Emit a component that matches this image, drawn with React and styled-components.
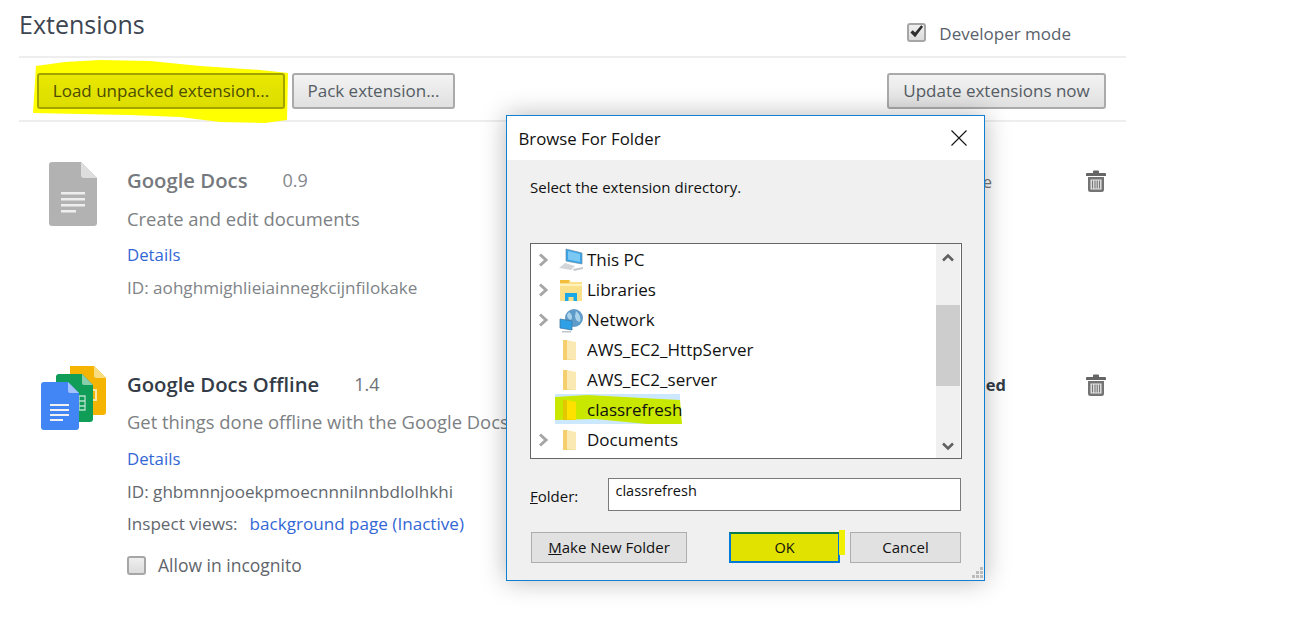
import React from "react";
import styled, { createGlobalStyle } from "styled-components";

const Global = createGlobalStyle`
  html, body { margin: 0; padding: 0; background: #fff; }
  #root { height: 624px; overflow: hidden; }
  * { box-sizing: border-box; }
`;

const Page = styled.div`
  position: relative;
  width: 1301px;
  height: 624px;
  padding-left: 19px;
  font-family: "Open Sans", sans-serif;
  color: #3c4550;
  isolation: isolate;
`;
const Content = styled.div`width: 1107px;`;
const Header = styled.header`
  height: 58px;
  border-bottom: 2px solid #eee;
  display: flex;
  justify-content: space-between;
  padding-right: 55px;
`;
const Title = styled.h1`
  margin: 6px 0 0;
  font-size: 25px;
  line-height: 36px;
  font-weight: 400;
  color: #3c4550;
`;
const DevMode = styled.label`
  display: flex;
  align-items: center;
  gap: 13px;
  height: 30px;
  margin-top: 18px;
  font-size: 17px;
  color: #59616b;
`;
const Box = styled.span`
  width: 19px;
  height: 19px;
  border: 2px solid #a6a6a6;
  border-radius: 3px;
  background: linear-gradient(#efefef, #dcdcdc);
  display: inline-flex;
  align-items: center;
  justify-content: center;
  flex: none;
  margin-top: ${p => p.$shift || 0}px;
`;
const Toolbar = styled.div`
  height: 64px;
  border-bottom: 2px solid #eee;
  padding: 15px 20px 0 18px;
  display: flex;
  gap: 7px;
`;
const ToolWrap = styled.div`
  position: relative;
  z-index: 0;
  margin-left: ${p => (p.$push ? "auto" : "0")};
`;
const ToolButton = styled.button`
  height: 36px;
  width: ${p => p.$w}px;
  border-radius: 3px;
  border: 2px solid ${p => (p.$hl ? "#a3a300" : "#aaa")};
  background: ${p => (p.$hl ? "linear-gradient(#e8e800, #dddd00)" : "linear-gradient(#f3f3f3, #e0e0e0)")};
  color: ${p => (p.$hl ? "#4c4c00" : "#555c64")};
  font-family: "Open Sans", sans-serif;
  font-size: 17px;
  padding: 0 0 2px;
`;
const Blob = styled.svg`
  position: absolute;
  left: -4px;
  top: -13px;
  z-index: -1;
`;
const List = styled.div`
  padding: 40px 20px 0 22px;
  display: flex;
  flex-direction: column;
  gap: 66px;
`;
const Row = styled.article`
  display: flex;
  align-items: flex-start;
`;
const IconCell = styled.div`
  width: 86px;
  height: 66px;
  flex: none;
`;
const Body = styled.div`
  flex: 1;
  padding-top: 4px;
  min-width: 0;
  white-space: nowrap;
`;
const NameLine = styled.div`
  display: flex;
  height: 30px;
  align-items: center;
  gap: 35px;
  padding-bottom: 2px;
`;
const Name = styled.span`
  font-size: 20.3px;
  font-weight: 600;
  color: ${p => (p.$off ? "#75797e" : "#333c47")};
`;
const Version = styled.span`
  font-size: 18px;
  color: ${p => (p.$off ? "#85888c" : "#6d7277")};
`;
const Desc = styled.div`
  margin-top: ${p => p.$gap}px;
  height: 24px;
  line-height: 24px;
  font-size: 18.4px;
  color: #7c7f83;
`;
const DetailLink = styled.a`
  display: block;
  margin-top: ${p => p.$gap}px;
  height: 24px;
  line-height: 24px;
  font-size: 16.8px;
  color: #3367d6;
`;
const Meta = styled.div`
  margin-top: ${p => p.$gap}px;
  height: 24px;
  line-height: 24px;
  font-size: 17.1px;
  color: ${p => (p.$off ? "#808488" : "#62676d")};
`;
const Inline = styled.a`
  color: #3367d6;
  margin-left: 12px;
`;
const Incognito = styled.label`
  display: flex;
  align-items: center;
  gap: 12px;
  margin-top: 17px;
  height: 24px;
  font-size: 17.5px;
  color: #5f656b;
`;
const Status = styled.div`
  width: 140px;
  flex: none;
  display: flex;
  justify-content: flex-end;
  align-items: flex-start;
`;
const StatusText = styled.span`
  font-size: 16.5px;
  line-height: 24px;
  margin-top: ${p => p.$top}px;
  margin-right: ${p => p.$end}px;
  font-weight: ${p => (p.$bold ? 700 : 400)};
  color: ${p => (p.$bold ? "#333c47" : "#777")};
  white-space: nowrap;
`;
const Trash = styled.svg`
  margin-top: 8px;
  flex: none;
`;

const Dialog = styled.section`
  position: absolute;
  left: 506px;
  top: 115px;
  width: 479px;
  height: 466px;
  border: 1px solid #0f7fd2;
  background: #f0f0f0;
  box-shadow: 0 0 24px rgba(0, 0, 0, 0.28);
  z-index: 2;
  font-family: "Open Sans", sans-serif;
  color: #111;
  display: flex;
  flex-direction: column;
`;
const TitleBar = styled.div`
  height: 44px;
  flex: none;
  background: #fff;
  display: flex;
  align-items: center;
  justify-content: space-between;
  padding: 0 17px 0 11.5px;
  font-size: 16.8px;
`;
const BarLabel = styled.span`
  padding-top: 1px;
`;
const DialogBody = styled.div`
  flex: 1;
  padding: 16px 23px 0 23px;
  display: flex;
  flex-direction: column;
  position: relative;
`;
const Prompt = styled.div`
  height: 22px;
  line-height: 22px;
  font-size: 15px;
`;
const Tree = styled.div`
  margin-top: 45px;
  width: 432px;
  height: 216px;
  border: 1px solid #666;
  background: #fff;
  display: flex;
`;
const TreeItems = styled.div`
  flex: 1;
`;
const TreeRow = styled.div`
  height: 30px;
  padding-top: 2px;
  display: flex;
  align-items: center;
  font-size: 17px;
  line-height: 22px;
  white-space: nowrap;
  position: relative;
  z-index: 0;
`;
const Chevron = styled.svg`
  width: 11px;
  height: 14px;
  margin-left: 7px;
  flex: none;
  visibility: ${p => (p.$hide ? "hidden" : "visible")};
`;
const TreeIcon = styled.svg`
  width: 26px;
  height: 26px;
  margin: -1px 3px 0 9px;
  flex: none;
`;
const Selected = styled.svg`
  position: absolute;
  display: block;
  left: 24px;
  top: 0;
  z-index: -1;
`;
const Scrollbar = styled.div`
  width: 24px;
  margin-right: 1px;
  background: #f0f0f0;
  display: flex;
  flex-direction: column;
  align-items: center;
  justify-content: space-between;
  position: relative;
  padding: 9px 0 7px;
`;
const Thumb = styled.div`
  position: absolute;
  left: 0;
  right: 0;
  top: 61px;
  height: 81px;
  background: #cdcdcd;
`;
const FolderRow = styled.div`
  margin-top: 19px;
  display: flex;
  align-items: flex-start;
`;
const FolderLabel = styled.label`
  width: 78px;
  padding-top: 7px;
  font-size: 15px;
  line-height: 22px;
`;
const FolderInput = styled.div`
  width: 353px;
  height: 33px;
  border: 1px solid #7a7a7a;
  background: #fff;
  padding: 0 6.5px;
  line-height: 24px;
  font-size: 14.5px;
`;
const Actions = styled.div`
  margin-top: 21px;
  display: flex;
  padding-left: 1px;
`;
const DlgButton = styled.button`
  height: 31px;
  width: ${p => p.$w}px;
  margin-left: ${p => p.$ml || 0}px;
  border: ${p => (p.$primary ? "2px solid #0078d7" : "1px solid #adadad")};
  border-top-color: ${p => (p.$primary ? "#0b7a4a" : "#adadad")};
  background: ${p => (p.$primary ? "#e2e200" : "#e1e1e1")};
  font-family: "Open Sans", sans-serif;
  font-size: ${p => (p.$primary ? 14.5 : 15)}px;
  color: #111;
  padding: ${p => (p.$primary ? "0" : "0 0 2px")};
  position: relative;
`;
const OkMark = styled.span`
  position: absolute;
  right: -7px;
  top: -4px;
  width: 6px;
  height: 25px;
  background: #f0f000;
`;
const Grip = styled.svg`
  position: absolute;
  right: 1px;
  bottom: 1px;
`;

const Check = () => (
  <svg width="16" height="16" viewBox="0 0 16 16">
    <path d="M1.5 8.5 L4 6 L6.5 8.5 L13 .8 L15 2.5 L6.5 13.5 Z" fill="#2e2e2e" />
  </svg>
);

const TrashIcon = () => (
  <Trash width="20" height="22" viewBox="0 0 20 22">
    <path d="M7 1.5 Q7 .5 8 .5 H12 Q13 .5 13 1.5 V3 H19 Q20 3 20 4 V6 H0 V4 Q0 3 1 3 H7 Z" fill="#666" />
    <path d="M2 7 H18 V19.5 Q18 22 15.5 22 H4.5 Q2 22 2 19.5 Z" fill="#747474" />
    <path d="M4.5 9.5 H15.5 V19.5 H4.5 Z" fill="#e6e6e6" />
    <path d="M6.5 10.5 V18.5 M9 10.5 V18.5 M11.2 10.5 V18.5 M13.5 10.5 V18.5" stroke="#777" strokeWidth="1.2" />
  </Trash>
);

const GreyDoc = () => (
  <svg width="48" height="64" viewBox="0 0 48 64" style={{ marginLeft: 8 }}>
    <path d="M3 0 H32 L48 16 V61 Q48 64 45 64 H3 Q0 64 0 61 V3 Q0 0 3 0 Z" fill="#b2b2b2" />
    <path d="M32 0 L48 16 H35 Q32 16 32 13 Z" fill="#dedede" />
    <path d="M12 30 H36 V32.5 H12 Z M12 36 H36 V38.5 H12 Z M12 42 H36 V44.5 H12 Z M12 48 H27 V50.5 H12 Z" fill="#eee" />
  </svg>
);

const DocStack = () => (
  <svg width="66" height="66" viewBox="0 0 66 66">
    <path d="M29 0 H53 L65 12 V46 Q65 49 62 49 H29 Z" fill="#f4b400" />
    <path d="M53 0 L65 12 H55 Q53 12 53 10 Z" fill="#f9db80" />
    <path d="M50 24 H55 V34 H50 Z" fill="none" stroke="#fbe7a8" strokeWidth="2" />
    <path d="M18 8 H41 L52 19 V53 Q52 56 49 56 H18 Q15 56 15 53 V11 Q15 8 18 8 Z" fill="#0f9d58" />
    <path d="M41 8 L52 19 H43 Q41 19 41 17 Z" fill="#87ceac" />
    <path d="M38 30 H44 V44 H38 Z M38 35 H44 M38 40 H44" fill="none" stroke="#b7e1cd" strokeWidth="1.3" />
    <path d="M3 16 H27 L38 27 V61 Q38 64 35 64 H3 Q0 64 0 61 V19 Q0 16 3 16 Z" fill="#4285f4" />
    <path d="M27 16 L38 27 H29 Q27 27 27 25 Z" fill="#a1c2fa" />
    <path d="M9 38 H28 V40 H9 Z M9 43 H28 V45 H9 Z M9 48 H28 V50 H9 Z M9 53 H22 V55 H9 Z" fill="#f1f1f1" />
  </svg>
);

const Chev = ({ hide }) => (
  <Chevron $hide={hide} viewBox="0 0 11 14">
    <path d="M2 1.5 L8 7 L2 12.5" fill="none" stroke="#a6a6a6" strokeWidth="3" />
  </Chevron>
);

const Folder = ({ hl }) => (
  <TreeIcon viewBox="0 0 26 26">
    <path d="M5 3 H8 L18 6 V23 L8 23 H5 Z" fill={hl ? "#f2d500" : "#f8df96"} />
    <path d="M8 3 L18 5 V23 L8 21.5 Z" fill={hl ? "#ffe100" : "#fbe9b4"} />
    <path d="M5 3 H9 V23 H5 Z" fill={hl ? "#e3c700" : "#f5cf6d"} />
  </TreeIcon>
);

const PcIcon = () => (
  <TreeIcon viewBox="0 0 26 26">
    <path d="M8 2 L24 6 V17 L8 14 Z" fill="#35a4ea" stroke="#6b8da5" strokeWidth=".7" />
    <path d="M10 4 L22 7 V15 L10 12.5 Z" fill="#7cc8f4" />
    <path d="M1 21 L7 16 L17 19 L13 23 Z" fill="#d3d7da" />
    <path d="M15 22 L25 20 V22 L16 24 Z" fill="#c5c9cc" />
  </TreeIcon>
);

const LibIcon = () => (
  <TreeIcon viewBox="0 0 26 26">
    <path d="M2 3 H12 L13 5 H24 V24 H2 Z" fill="#fbe08b" />
    <path d="M2 3 H11 V6 H2 Z" fill="#f2bd3a" />
    <path d="M2 7 H24 V9 H2 Z" fill="#fff1bc" />
    <path d="M7 16 H19 V24 H15.5 V20 H10.5 V24 H7 Z" fill="#1aa9e8" />
  </TreeIcon>
);

const NetIcon = () => (
  <TreeIcon viewBox="0 0 26 26">
    <circle cx="16" cy="11" r="9" fill="#5f9bc9" />
    <path d="M11 5 Q16 9 13 13 Q9 12 9 8 Z M18 4 Q24 9 22 15 Q17 14 17 9 Z" fill="#a9d3ea" />
    <path d="M2 12 L14 14 V23 L2 21 Z" fill="#2ea0e6" stroke="#3a78a6" strokeWidth=".8" />
    <path d="M4 24 H13 V25.5 H4 Z" fill="#bfc6cb" />
  </TreeIcon>
);

const ScrollArrow = ({ down }) => (
  <svg width="12" height="9" viewBox="0 0 12 9" style={{ position: "relative" }}>
    <path d={down ? "M1 1.5 L6 6.5 L11 1.5" : "M1 7.5 L6 2.5 L11 7.5"} fill="none" stroke="#606060" strokeWidth="2.6" />
  </svg>
);

export default function App() {
  return (
    <Page>
      <Global />
      <Content>
        <Header>
          <Title>Extensions</Title>
          <DevMode>
            <Box $shift={-2}><Check /></Box>
            Developer mode
          </DevMode>
        </Header>
        <Toolbar>
          <ToolWrap>
            <Blob width="256" height="64" viewBox="0 0 256 64">
              <path d="M3 6 L32 2 L67 0 L117 1 L167 6 L227 10 L255 13 L254 60 L232 63 L187 62 L147 57 L97 55 L0 53 Z" fill="#ffff00" />
            </Blob>
            <ToolButton $hl $w={248}>Load unpacked extension...</ToolButton>
          </ToolWrap>
          <ToolWrap>
            <ToolButton $w={163}>Pack extension...</ToolButton>
          </ToolWrap>
          <ToolWrap $push>
            <ToolButton $w={219}>Update extensions now</ToolButton>
          </ToolWrap>
        </Toolbar>
        <List>
          <Row>
            <IconCell><GreyDoc /></IconCell>
            <Body>
              <NameLine>
                <Name $off>Google Docs</Name>
                <Version $off>0.9</Version>
              </NameLine>
              <Desc $gap={11}>Create and edit documents</Desc>
              <DetailLink $gap={12}>Details</DetailLink>
              <Meta $gap={9} $off>ID: aohghmighlieiainnegkcijnfilokake</Meta>
            </Body>
            <Status>
              <StatusText $top={8} $end={94}>Enable</StatusText>
              <TrashIcon />
            </Status>
          </Row>
          <Row>
            <IconCell><DocStack /></IconCell>
            <Body>
              <NameLine>
                <Name>Google Docs Offline</Name>
                <Version>1.4</Version>
              </NameLine>
              <Desc $gap={10}>Get things done offline with the Google Docs, Sheets and Slides</Desc>
              <DetailLink $gap={13}>Details</DetailLink>
              <Meta $gap={9}>ID: ghbmnnjooekpmoecnnnilnnbdlolhkhi</Meta>
              <Meta $gap={8}>Inspect views:<Inline>background page (Inactive)</Inline></Meta>
              <Incognito><Box />Allow in incognito</Incognito>
            </Body>
            <Status>
              <StatusText $bold $top={7} $end={80}>Enabled</StatusText>
              <TrashIcon />
            </Status>
          </Row>
        </List>
      </Content>

      <Dialog>
        <TitleBar>
          <BarLabel>Browse For Folder</BarLabel>
          <svg width="16" height="16" viewBox="0 0 16 16">
            <path d="M.5 .5 L15.5 15.5 M15.5 .5 L.5 15.5" stroke="#111" strokeWidth="1.1" />
          </svg>
        </TitleBar>
        <DialogBody>
          <Prompt>Select the extension directory.</Prompt>
          <Tree>
            <TreeItems>
              <TreeRow><Chev /><PcIcon />This PC</TreeRow>
              <TreeRow><Chev /><LibIcon />Libraries</TreeRow>
              <TreeRow><Chev /><NetIcon />Network</TreeRow>
              <TreeRow><Chev hide /><Folder />AWS_EC2_HttpServer</TreeRow>
              <TreeRow><Chev hide /><Folder />AWS_EC2_server</TreeRow>
              <TreeRow>
                <Selected width="127" height="30" viewBox="0 0 127 30">
                  <path d="M0 0 H125 V30 H0 Z" fill="#cce8ff" />
                  <path d="M0 3 L32 1 L125 6 L127 30 L92 30 L40 25 L0 26 Z" fill="#c9e800" />
                </Selected>
                <Chev hide /><Folder hl />classrefresh
              </TreeRow>
              <TreeRow><Chev /><Folder />Documents</TreeRow>
            </TreeItems>
            <Scrollbar>
              <ScrollArrow />
              <Thumb />
              <ScrollArrow down />
            </Scrollbar>
          </Tree>
          <FolderRow>
            <FolderLabel><u>F</u>older:</FolderLabel>
            <FolderInput>classrefresh</FolderInput>
          </FolderRow>
          <Actions>
            <DlgButton $w={156}><u>M</u>ake New Folder</DlgButton>
            <DlgButton $primary $w={111} $ml={42}>OK<OkMark /></DlgButton>
            <DlgButton $w={111} $ml={10}>Cancel</DlgButton>
          </Actions>
          <Grip width="12" height="12" viewBox="0 0 12 12">
            <path d="M9 0 H12 V3 H9 Z M5 4 H8 V7 H5 Z M9 4 H12 V7 H9 Z M1 8 H4 V11 H1 Z M5 8 H8 V11 H5 Z M9 8 H12 V11 H9 Z" fill="#bbb" />
          </Grip>
        </DialogBody>
      </Dialog>
    </Page>
  );
}
